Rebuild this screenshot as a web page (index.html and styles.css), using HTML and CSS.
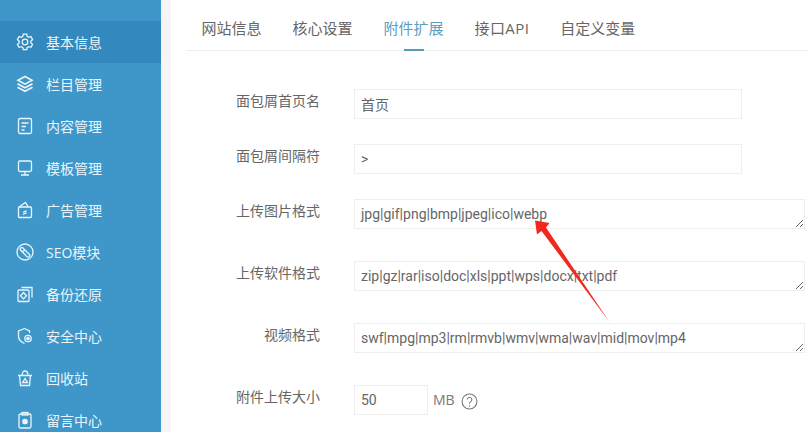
FILE: index.html
```html
<!DOCTYPE html>
<html lang="zh-CN">

<head>
    <meta charset="UTF-8">
    <meta name="viewport" content="width=device-width, initial-scale=1.0">
    <title>基本信息</title>
    <link rel="stylesheet" href="styles.css">
</head>

<body>
    <aside class="sidebar">
        <a class="side-item active" href="#">
            <svg class="side-icon" viewBox="0 0 18 18"><path d="M7.300 1.200h3.400l.5 2.200 1.500.9 2.200-.7 1.700 2.900-1.700 1.500v1.900l1.700 1.500-1.700 2.900-2.200-.7-1.500.9-.5 2.200H7.300l-.5-2.200-1.500-.9-2.200.7-1.700-2.900 1.700-1.500V8l-1.700-1.500 1.700-2.900 2.200.7 1.500-.9z"/><circle cx="9" cy="9" r="2.800"/></svg>
            <span>基本信息</span>
        </a>
        <a class="side-item" href="#">
            <svg class="side-icon layers" viewBox="0 0 18 18"><path d="M9 1.500l7 3.800-7 3.800-7-3.800z"/><path d="M1.500 8.800L9 12.800l7.500-4"/><path d="M1.500 12.300L9 16.300l7.500-4"/></svg>
            <span>栏目管理</span>
        </a>
        <a class="side-item" href="#">
            <svg class="side-icon" viewBox="0 0 18 18"><rect x="2.500" y="1.500" width="13" height="15" rx="1.500"/><path d="M5.500 6h7M5.500 9.500h4.500M5.500 13h3"/></svg>
            <span>内容管理</span>
        </a>
        <a class="side-item" href="#">
            <svg class="side-icon" viewBox="0 0 18 18"><rect x="2.500" y="2" width="13" height="10.500" rx="1.500"/><path d="M9 12.500v3M5 16h8"/></svg>
            <span>模板管理</span>
        </a>
        <a class="side-item" href="#">
            <svg class="side-icon" viewBox="0 0 18 18"><rect x="2.500" y="6" width="13" height="10.500" rx="1"/><path d="M3 6l6.500-4.500 2.800 4.500M7 11.500l3.500-1.800M7 13.500l3.500-1.800"/></svg>
            <span>广告管理</span>
        </a>
        <a class="side-item" href="#">
            <svg class="side-icon" viewBox="0 0 18 18"><circle cx="9" cy="9" r="8"/><path d="M6.700 4.800l6.500 6.500a1.600 1.600 0 0 1-2.300 2.300L4.500 7a1.600 1.600 0 0 1 2.200-2.200zM7 8.500l2-2"/></svg>
            <span>SEO模块</span>
        </a>
        <a class="side-item" href="#">
            <svg class="side-icon" viewBox="0 0 18 18"><rect x="2" y="5" width="11" height="11.500" rx="1"/><path d="M5.500 2.500h10.500v10M7.500 7.500l3 3.200-3 3.200-3-3.200z"/></svg>
            <span>备份还原</span>
        </a>
        <a class="side-item" href="#">
            <svg class="side-icon" viewBox="0 0 18 18"><path d="M8.500 1.500L2.500 4v5c0 3.500 2.500 6 6 7.500M8.500 1.500l5 2.500v2"/><circle cx="12" cy="11.500" r="3.200"/><circle class="dot" cx="12" cy="11.500" r="1.200"/></svg>
            <span>安全中心</span>
        </a>
        <a class="side-item" href="#">
            <svg class="side-icon" viewBox="0 0 18 18"><path d="M2 6.500h14M3.500 6.500l1 10h9l1-10M6 6.500c0-6 6-6 6 0M9 9.500l-2.500 4h5z"/></svg>
            <span>回收站</span>
        </a>
        <a class="side-item" href="#">
            <svg class="side-icon" viewBox="0 0 18 18"><rect x="3" y="3" width="12" height="14" rx="1.500"/><rect x="6" y="1.500" width="6" height="2.500"/><circle class="dot" cx="9" cy="10.500" r="2.200"/></svg>
            <span>留言中心</span>
        </a>
    </aside>

    <main class="main">
        <nav class="tabs">
            <a href="#">网站信息</a>
            <a href="#">核心设置</a>
            <a class="current" href="#">附件扩展</a>
            <a class="api" href="#">接口API</a>
            <a href="#">自定义变量</a>
        </nav>

        <form class="form">
            <div class="form-row">
                <label class="form-label">面包屑首页名</label>
                <input class="field field-mid" type="text" value="首页">
            </div>
            <div class="form-row">
                <label class="form-label">面包屑间隔符</label>
                <input class="field field-mid" type="text" value="&gt;">
            </div>
            <div class="form-row">
                <label class="form-label">上传图片格式</label>
                <textarea class="field field-wide">jpg|gif|png|bmp|jpeg|ico|webp</textarea>
            </div>
            <div class="form-row">
                <label class="form-label">上传软件格式</label>
                <textarea class="field field-wide">zip|gz|rar|iso|doc|xls|ppt|wps|docx|txt|pdf</textarea>
            </div>
            <div class="form-row">
                <label class="form-label">视频格式</label>
                <textarea class="field field-wide">swf|mpg|mp3|rm|rmvb|wmv|wma|wav|mid|mov|mp4</textarea>
            </div>
            <div class="form-row">
                <label class="form-label">附件上传大小</label>
                <input class="field field-small" type="text" value="50">
                <span class="unit">MB</span>
                <svg class="help" viewBox="0 0 16 16"><circle cx="8" cy="8" r="7"/><path d="M5.800 6.200a2.200 2.200 0 1 1 3.400 1.900c-.8.500-1.200 1-1.200 2"/><path d="M8 11.500v1.200"/></svg>
            </div>
        </form>
    </main>

    <!-- red annotation arrow over the form -->
    <svg class="arrow" viewBox="0 0 809 432">
        <path d="M535 220.500L549.500 223 546 227.500 609.500 322 541.500 231 537 234.500z"/>
    </svg>
</body>

</html>
```

FILE: styles.css
```css
html {
    box-sizing: border-box;
    font-family: "Open Sans", "Noto Sans CJK SC", sans-serif;
    font-size: 14px;
}

*,
*:before,
*:after {
    box-sizing: inherit;
}

body {
    margin: 0;
    height: 432px;
    display: flex;
    overflow: hidden;
    position: relative;
    background-color: #f5f5f5;
}

.sidebar {
    width: 161px;
    flex-shrink: 0;
    padding-top: 21px;
    background-color: #3f97c9;
}

.side-item {
    height: 42px;
    display: flex;
    align-items: center;
    padding-left: 16px;
    gap: 12px;
    color: #eaf5fb;
    text-decoration: none;
}

.side-item.active {
    background-color: #3389bd;
}

.side-icon {
    width: 18px;
    height: 18px;
    flex-shrink: 0;
    fill: none;
    stroke: #eaf5fb;
    stroke-width: 1.300;
}

.side-icon.layers {
    stroke-width: 1.600;
}

.side-icon .dot {
    fill: #eaf5fb;
}

.main {
    flex-grow: 1;
    margin-left: 10px;
    background-color: #fff;
}

.tabs {
    height: 51px;
    margin-left: 15px;
    display: flex;
    border-bottom: 1px solid #eeeeee;
}

.tabs a {
    position: relative;
    padding: 17px 15.500px 0;
    font-size: 15px;
    line-height: 22px;
    color: #666;
    text-decoration: none;
}

.tabs a.api {
    letter-spacing: .4px;
}

.tabs a.current {
    color: #5a9ec2;
}

.tabs a.current:after {
    content: "";
    position: absolute;
    left: 50%;
    bottom: -1px;
    width: 20px;
    height: 2px;
    margin-left: -10px;
    background-color: #5a9ab8;
}

.form {
    padding-top: 38px;
}

.form-row {
    height: 30px;
    margin-bottom: 25px;
    display: flex;
    align-items: flex-start;
}

.form-row:nth-child(n+3) {
    margin-bottom: 32px;
}

.form-label {
    width: 149px;
    margin-right: 34px;
    text-align: right;
    line-height: 24px;
    color: #666;
}

.field {
    height: 30px;
    padding: 0 6px;
    border: 1px solid #eeeeee;
    border-radius: 0;
    outline: none;
    font-family: Roboto, "Noto Sans CJK SC", sans-serif;
    font-size: 14px;
    line-height: 28px;
    color: #666;
    background-color: #fff;
}

.field-mid {
    width: 388px;
}

.field-wide {
    width: 451px;
    overflow: hidden;
}

.field-small {
    width: 74px;
}

.unit {
    margin-left: 5px;
    line-height: 30px;
    color: #777;
}

.help {
    width: 17px;
    height: 17px;
    margin: 8px 0 0 6px;
    fill: none;
    stroke: #777;
    stroke-width: 1;
}

.arrow {
    position: absolute;
    left: 0;
    top: 0;
    width: 809px;
    height: 432px;
    pointer-events: none;
    fill: #f0281e;
}
```
